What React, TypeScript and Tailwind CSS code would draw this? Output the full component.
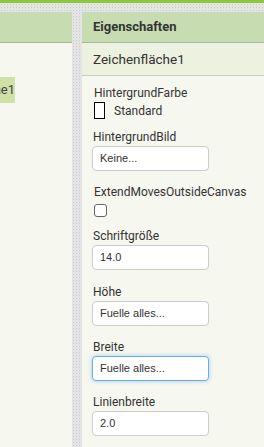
import React from 'react';

const dotted =
  'bg-[#e4e4e4] bg-[radial-gradient(#c9c9c9_0.6px,transparent_0.7px)] bg-[length:3px_3px]';

const Label: React.FC<{ text: string; className?: string }> = ({ text, className = '' }) => (
  <div className={`text-[12px] leading-[16px] text-[#333] ${className}`}>{text}</div>
);

const TextBox: React.FC<{ value: string; focused?: boolean }> = ({ value, focused }) => (
  <div
    className={`mt-[1px] w-[117px] h-[25px] rounded-[4px] bg-white flex items-center pl-[7px] text-[11px] text-[#333] ${
      focused
        ? 'border border-[#66afe9] shadow-[0_0_4px_rgba(102,175,233,0.6)]'
        : 'border border-[#cccccc]'
    }`}
    style={{ fontFamily: '"Liberation Sans", Arial, sans-serif' }}
  >
    {value}
  </div>
);

const App: React.FC = () => {
  return (
    <div
      className="w-[264px] h-[447px] overflow-hidden flex flex-col bg-[#f6f7ef]"
      style={{ fontFamily: 'Roboto, "Noto Sans", sans-serif' }}
    >
      {/* Top bar */}
      <div className="h-[3px] bg-[#8dc63f]" />
      <div className={`h-[9px] ${dotted}`} />

      <div className="flex flex-1 min-h-0">
        {/* Left panel */}
        <div className="w-[72px] flex flex-col">
          <div className="h-[31px] bg-[#c8dcb2] border-b border-[#a9b59c]" />
          <div className="mt-[34px] w-[15px] h-[26px] bg-[#cfe0a8] overflow-hidden flex items-center justify-end">
            <span className="whitespace-nowrap text-[13px] text-[#444]">Zeichenfläche1</span>
          </div>
        </div>

        {/* Splitter */}
        <div className={`w-[10px] ${dotted}`} />

        {/* Properties panel */}
        <div className="flex-1 flex flex-col">
          <div className="h-[31px] bg-[#c8dcb2] border-b border-[#a9b59c] flex items-center pl-[11px]">
            <span className="text-[13px] font-bold text-[#333]">Eigenschaften</span>
          </div>
          <div className="h-[33px] bg-[#edf1e0] border-b border-[#c9cdc0] flex items-center pl-[11px]">
            <span className="text-[13.5px] text-[#333]">Zeichenfläche1</span>
          </div>

          <div className="flex flex-col pl-[10px] pt-[9px]">
            <Label text="HintergrundFarbe" className="pl-[2px]" />
            <div className="mt-[1px] flex items-center h-[17px] pl-[2px]">
              <div className="w-[11px] h-[17px] border border-black bg-white" />
              <span className="ml-[9px] text-[12px] text-[#333]">Standard</span>
            </div>

            <Label text="HintergrundBild" className="mt-[10px] pl-[1px]" />
            <TextBox value="Keine..." />

            <Label text="ExtendMovesOutsideCanvas" className="mt-[13px] pl-[2px]" />
            <div className="mt-[4px] ml-[2px] w-[13px] h-[13px] rounded-[3px] border border-[#666] bg-white" />

            <Label text="Schriftgröße" className="mt-[11px] pl-[1px]" />
            <TextBox value="14.0" />

            <Label text="Höhe" className="mt-[14px] pl-[1px]" />
            <TextBox value="Fuelle alles..." />

            <Label text="Breite" className="mt-[13px] pl-[1px]" />
            <TextBox value="Fuelle alles..." focused />

            <Label text="Linienbreite" className="mt-[13px] pl-[1px]" />
            <TextBox value="2.0" />
          </div>
        </div>
      </div>
    </div>
  );
};

export default App;
